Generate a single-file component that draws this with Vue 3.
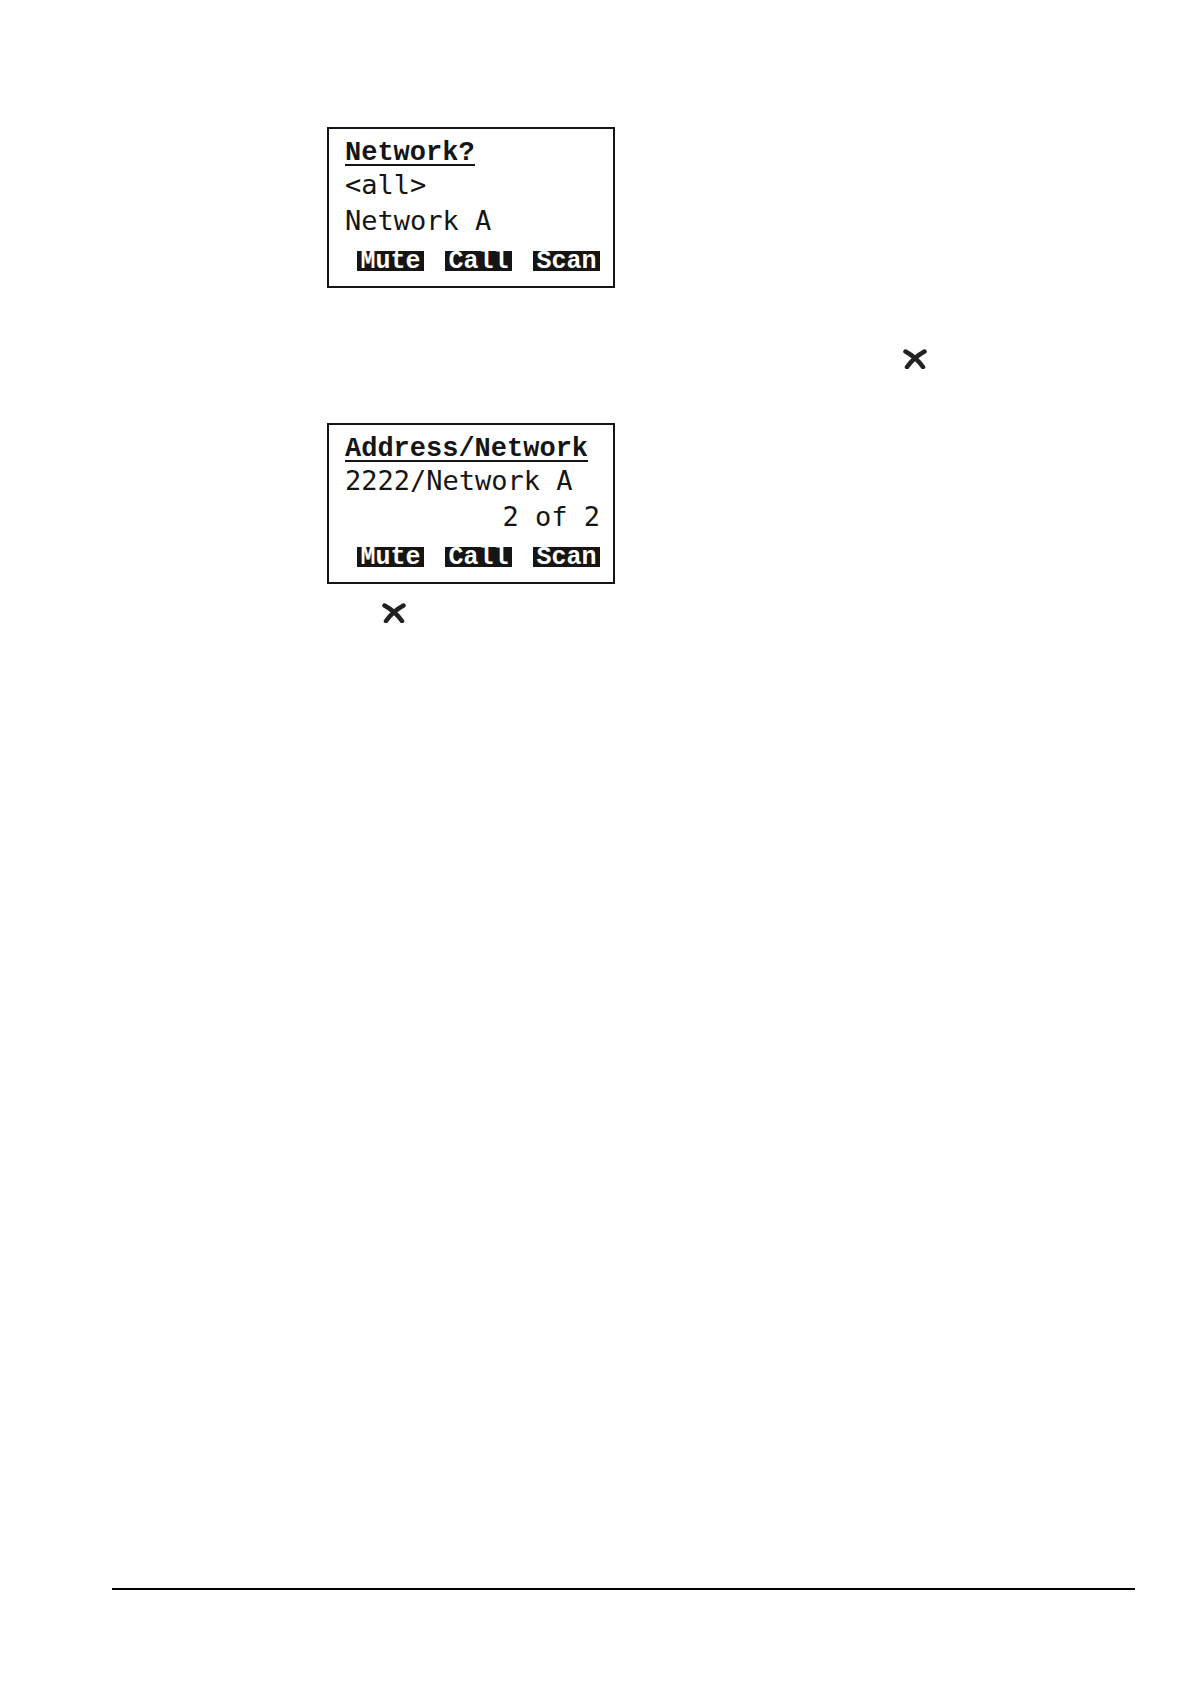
<template>
  <main class="page">
    <section class="content">
      <div v-for="(screen, i) in screens" :key="screen.title" class="step">
        <div class="lcd">
          <h2 class="title"><span>{{ screen.title }}</span></h2>
          <p
            v-for="line in screen.lines"
            :key="line.text"
            class="line"
            :class="{ right: line.right }"
          >{{ line.text }}</p>
          <div class="softkeys">
            <button v-for="key in softkeys" :key="key" type="button">{{ key }}</button>
          </div>
        </div>
        <div class="note" :class="i === 0 ? 'note-far' : 'note-near'">
          <svg class="cross" viewBox="0 0 24 20" aria-hidden="true">
            <path d="M2.5 2.5 C9 6 15 11 20 18 M21.5 2.5 C15 6 9 11 4 18" />
          </svg>
        </div>
      </div>
    </section>
    <hr class="rule" />
  </main>
</template>

<script setup>
const softkeys = ['Mute', 'Call', 'Scan']

const screens = [
  {
    title: 'Network?',
    lines: [{ text: '<all>' }, { text: 'Network A' }]
  },
  {
    title: 'Address/Network',
    lines: [{ text: '2222/Network A' }, { text: '2 of 2', right: true }]
  }
]
</script>

<style>
body {
  margin: 0;
  background: #fff;
}
</style>

<style scoped>
.page {
  display: flex;
  flex-direction: column;
  box-sizing: border-box;
  min-height: 100vh;
  padding: 127px 55px 94px 112px;
  color: #151515;
}

.content {
  padding-left: 215px;
}

.lcd {
  box-sizing: border-box;
  width: 288px;
  padding: 12px 13px 15px 16px;
  border: 2px solid #151515;
}

.title {
  margin: 0;
  height: 26px;
  font: bold 27px/24px "Liberation Mono", monospace;
}

.title span {
  display: inline-block;
  height: 23px;
  border-bottom: 2px solid #151515;
}

.line {
  margin: 0;
  height: 36px;
  font: 27px/36px "DejaVu Sans Mono", monospace;
  white-space: pre;
}

.right {
  text-align: right;
}

.softkeys {
  display: flex;
  justify-content: flex-end;
  gap: 21px;
  margin-top: 12px;
}

.softkeys button {
  width: 67px;
  height: 20px;
  padding: 2px 0 0;
  border: 0;
  background: #151515;
  color: #fff;
  font: bold 25px/18px "Liberation Mono", monospace;
  text-align: center;
}

.note {
  display: flex;
}

.note-far {
  justify-content: flex-end;
  padding: 61px 208px 54px 0;
}

.note-near {
  padding: 19px 0 0 55px;
}

.cross {
  width: 24px;
  height: 20px;
}

.cross path {
  fill: none;
  stroke: #222;
  stroke-width: 4.5;
  stroke-linecap: round;
}

.rule {
  width: 100%;
  height: 2px;
  margin: auto 0 0;
  border: 0;
  background: #000;
}
</style>
